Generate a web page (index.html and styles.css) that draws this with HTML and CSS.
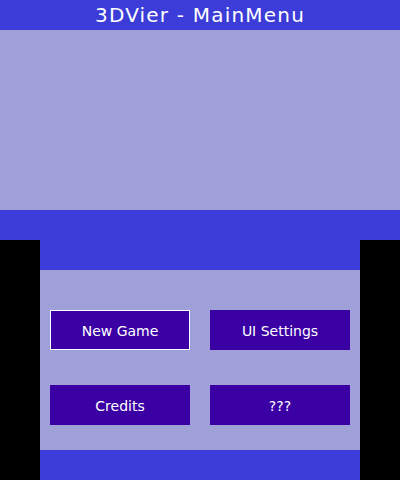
FILE: index.html
```html
<!DOCTYPE html>
<html>
<head>
<meta charset="utf-8">
<link rel="stylesheet" href="styles.css">
</head>
<body>
<div class="top">
  <div class="title">3DVier - MainMenu</div>
  <div class="top-view"></div>
  <div class="top-footer"></div>
</div>
<div class="bottom">
  <div class="side"></div>
  <div class="panel">
    <div class="bar"></div>
    <div class="menu">
      <div class="btn selected">New Game</div>
      <div class="btn">UI Settings</div>
      <div class="btn">Credits</div>
      <div class="btn">???</div>
    </div>
    <div class="bar"></div>
  </div>
  <div class="side"></div>
</div>
</body>
</html>
```
FILE: styles.css
```css
html, body {
  margin: 0;
  padding: 0;
  background: #000;
}
body {
  width: 400px;
  height: 480px;
  overflow: hidden;
  font-family: "DejaVu Sans", sans-serif;
  color: #fff;
}
.top {
  display: flex;
  flex-direction: column;
  height: 240px;
}
.title {
  height: 30px;
  background: #3c3cd8;
  display: flex;
  align-items: center;
  justify-content: center;
  font-size: 20px;
  letter-spacing: 1.2px;
  line-height: 30px;
}
.top-view {
  height: 180px;
  background: #a0a0d8;
}
.top-footer {
  height: 30px;
  background: #3c3cd8;
}
.bottom {
  display: flex;
  height: 240px;
}
.side {
  width: 40px;
  background: #000;
}
.panel {
  width: 320px;
  display: flex;
  flex-direction: column;
}
.bar {
  height: 30px;
  background: #3c3cd8;
}
.menu {
  height: 180px;
  box-sizing: border-box;
  background: #a0a0d8;
  padding: 40px 10px 0;
  display: grid;
  grid-template-columns: 140px 140px;
  grid-auto-rows: 40px;
  column-gap: 20px;
  row-gap: 35px;
  align-content: start;
}
.btn {
  background: #3a00a4;
  display: flex;
  align-items: center;
  justify-content: center;
  font-size: 14px;
  padding-top: 2px;
  box-sizing: border-box;
}
.btn.selected {
  border: 1px solid #fff;
}
```
